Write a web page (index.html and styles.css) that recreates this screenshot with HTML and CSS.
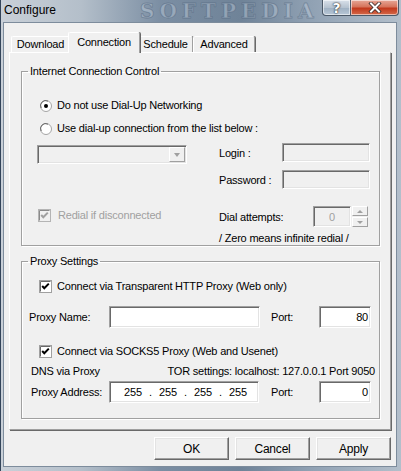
FILE: index.html
```html
<!DOCTYPE html>
<html>
<head>
<meta charset="utf-8">
<link rel="stylesheet" href="styles.css">
</head>
<body>
<div class="window">
  <div class="titlebar">
    <span class="title">Configure</span>
    <span class="wm-title">SOFTPEDIA</span>
    <div class="caption-btns">
      <div class="cbtn help">?</div>
      <div class="cbtn close">
        <svg width="14" height="11" viewBox="0 0 14 11"><path d="M3 1.5L11 9.5M11 1.5L3 9.5" stroke="#3a2a28" stroke-width="3.6" stroke-linecap="square"/><path d="M3 1.5L11 9.5M11 1.5L3 9.5" stroke="#fff" stroke-width="2" stroke-linecap="square"/></svg>
      </div>
    </div>
  </div>
  <div class="client">
    <div class="tabs">
      <div class="tab t-download">Download</div>
      <div class="tab t-connection active">Connection</div>
      <div class="tab t-schedule">Schedule</div>
      <div class="tab t-advanced">Advanced</div>
    </div>
    <div class="page">
      <fieldset class="group g1">
        <legend>Internet Connection Control</legend>
        <div class="g1-body">
          <div class="opt-row">
            <svg class="rb" width="12" height="12" viewBox="0 0 12 12"><circle cx="6" cy="6" r="5.5" fill="#fff" stroke="#a4a4a4"/><path d="M1.2 8A5 5 0 0 1 8 1.2" fill="none" stroke="#6a6a6a"/><circle cx="6" cy="6" r="2" fill="#000"/></svg>
            <span>Do not use Dial-Up Networking</span>
          </div>
          <div class="opt-row r2">
            <svg class="rb" width="12" height="12" viewBox="0 0 12 12"><circle cx="6" cy="6" r="5.5" fill="#fff" stroke="#a4a4a4"/><path d="M1.2 8A5 5 0 0 1 8 1.2" fill="none" stroke="#6a6a6a"/></svg>
            <span>Use dial-up connection from the list below :</span>
          </div>
          <div class="dial-block">
            <div class="left-col">
              <div class="field disabled combo">
                <div class="drop"><span class="arrow-down"></span></div>
              </div>
              <div class="opt-row redial">
                <svg width="13" height="13" viewBox="0 0 13 13"><rect x="0.5" y="0.5" width="12" height="12" fill="#f0f0f0" stroke="#b4b4b4"/><path d="M1.5 11.5V1.5H11.5" fill="none" stroke="#8a8a8a"/><path d="M3.2 6L5.3 8.2L9.8 3.6" stroke="#a0a0a0" stroke-width="2" fill="none"/></svg>
                <span class="dim">Redial if disconnected</span>
              </div>
            </div>
            <div class="right-col">
              <div class="frow">
                <span class="lbl w-login">Login :</span>
                <div class="field disabled in-login"></div>
              </div>
              <div class="frow pw">
                <span class="lbl w-login">Password :</span>
                <div class="field disabled in-login"></div>
              </div>
              <div class="frow dial">
                <span class="lbl w-dial">Dial attempts:</span>
                <div class="field disabled spin-in">0</div>
                <div class="spin-btns">
                  <div class="sbtn"><span class="arrow-up"></span></div>
                  <div class="sbtn"><span class="arrow-down small"></span></div>
                </div>
              </div>
              <div class="frow zero">/ Zero means infinite redial /</div>
            </div>
          </div>
        </div>
      </fieldset>
      <fieldset class="group g2">
        <legend>Proxy Settings</legend>
        <div class="g2-body">
          <div class="opt-row cb">
            <svg width="13" height="13" viewBox="0 0 13 13"><rect x="0.5" y="0.5" width="12" height="12" fill="#fff" stroke="#a0a0a0"/><path d="M1.5 11.5V1.5H11.5" fill="none" stroke="#696969"/><path d="M3.2 6L5.3 8.2L9.8 3.6" stroke="#000" stroke-width="2" fill="none"/></svg>
            <span>Connect via Transparent HTTP Proxy (Web only)</span>
          </div>
          <div class="prow name">
            <span class="lbl w-name">Proxy Name:</span>
            <div class="field in-name"></div>
            <span class="lbl w-port">Port:</span>
            <div class="field in-port">80</div>
          </div>
          <div class="opt-row cb cb2">
            <svg width="13" height="13" viewBox="0 0 13 13"><rect x="0.5" y="0.5" width="12" height="12" fill="#fff" stroke="#a0a0a0"/><path d="M1.5 11.5V1.5H11.5" fill="none" stroke="#696969"/><path d="M3.2 6L5.3 8.2L9.8 3.6" stroke="#000" stroke-width="2" fill="none"/></svg>
            <span>Connect via SOCKS5 Proxy (Web and Usenet)</span>
          </div>
          <div class="prow dns">
            <span>DNS via Proxy</span>
            <span>TOR settings: localhost: 127.0.0.1 Port 9050</span>
          </div>
          <div class="prow addr">
            <span class="lbl w-addr">Proxy Address:</span>
            <div class="field in-ip">
              <span class="oct">255</span><span class="dot">.</span><span class="oct">255</span><span class="dot">.</span><span class="oct">255</span><span class="dot">.</span><span class="oct">255</span>
            </div>
            <span class="lbl w-port2">Port:</span>
            <div class="field in-port">0</div>
          </div>
        </div>
      </fieldset>
    </div>
    <div class="buttons">
      <div class="btn">OK</div>
      <div class="btn">Cancel</div>
      <div class="btn">Apply</div>
    </div>
  </div>
</div>
</body>
</html>
```
FILE: styles.css
```css
html, body {
  margin: 0;
  padding: 0;
}
body {
  font: 11px "Liberation Sans", Arial, sans-serif;
  letter-spacing: -0.2px;
  color: #000;
  background: #8fa1b4;
}
.window {
  position: relative;
  width: 401px;
  height: 471px;
  box-sizing: border-box;
  display: flex;
  flex-direction: column;
  padding: 0 4px 4px 2px;
  border-left: 1px solid #34455a;
  overflow: hidden;
  background:
    linear-gradient(to right, #c9d0d8 0%, #b4bfca 20%, #7b8ea3 40%, #6f8398 60%, #91a2b4 78%, #b3bfcb 100%);
}
.titlebar {
  position: relative;
  height: 22px;
  display: flex;
  align-items: flex-start;
  flex: none;
}
.title {
  font: 12px "Liberation Sans", Arial, sans-serif;
  letter-spacing: 0;
  padding: 3px 0 0 1px;
  line-height: 15px;
  color: #000;
}
.wm-title {
  position: absolute;
  left: 137px;
  top: 1px;
  font: bold 20px "DejaVu Serif", serif;
  letter-spacing: 5px;
  line-height: 20px;
  color: rgba(210, 222, 235, 0.35);
  -webkit-text-stroke: 1px rgba(60, 80, 105, 0.35);
}
.caption-btns {
  margin-left: auto;
  margin-right: -2px;
  display: flex;
  position: relative;
  z-index: 1;
}
.cbtn {
  box-sizing: border-box;
  height: 16px;
  border: 1px solid #4b5968;
  border-top: none;
  display: flex;
  align-items: center;
  justify-content: center;
  box-shadow: inset 0 0 0 1px rgba(255,255,255,0.55);
}
.help {
  width: 29px;
  border-radius: 0 0 0 4px;
  background: linear-gradient(#d9e1ea, #b6c3d0 50%, #9eb0c2 51%, #b8c7d6);
  color: #fff;
  font: bold 14px "DejaVu Sans", sans-serif;
  text-shadow: 0 0 2px #222, 0 0 1px #222;
  line-height: 14px;
}
.close {
  width: 48px;
  border-left: none;
  border-radius: 0 0 4px 0;
  background: linear-gradient(#e7a898, #d6745c 45%, #c2391d 55%, #d46a4a);
}
.client {
  flex: 1;
  box-sizing: border-box;
  border: 1px solid #7d8c9c;
  background: #f0f0f0;
  display: flex;
  flex-direction: column;
  padding: 9px 4px 0 5px;
}
.tabs {
  display: flex;
  align-items: flex-end;
  height: 20px;
  flex: none;
}
.tab {
  box-sizing: border-box;
  height: 16px;
  border-top: 1px solid #fff;
  border-left: 1px solid #fff;
  border-right: 1px solid #a0a0a0;
  box-shadow: 1px 0 0 #696969;
  border-radius: 2px 2px 0 0;
  display: flex;
  align-items: center;
  justify-content: center;
  padding-bottom: 1px;
  background: #f0f0f0;
  position: relative;
}
.t-download { width: 59px; margin-left: 2px; }
.t-connection { width: 72px; margin: 0 -2px -1px -2px; height: 21px; z-index: 2; padding-bottom: 2px; }
.t-schedule { width: 55px; }
.t-advanced { width: 62px; }
.page {
  position: relative;
  width: 382px;
  height: 378px;
  box-sizing: border-box;
  flex: none;
  border-top: 1px solid #fff;
  border-left: 1px solid #fff;
  border-right: 1px solid #a0a0a0;
  border-bottom: 1px solid #a0a0a0;
  box-shadow: 1px 1px 0 #696969;
  display: flex;
  flex-direction: column;
}
.group {
  margin: 0 0 0 11px;
  padding: 0;
  width: 359px;
  box-sizing: border-box;
  border: 1px solid #a0a0a0;
  box-shadow: inset 1px 1px 0 #fff, 1px 1px 0 #fff;
  min-width: 0;
}
.g1 { margin-top: 12px; }
.g2 { margin-top: 9px; }
.group legend {
  padding: 0 2px;
  margin-left: 6px;
  line-height: 13px;
  height: 13px;
}
.opt-row {
  display: flex;
  align-items: center;
  height: 13px;
  line-height: 13px;
  gap: 5px;
  white-space: nowrap;
}
.opt-row svg { flex: none; }
.g1-body {
  display: flex;
  flex-direction: column;
  padding: 21px 0 1px 0;
}
.g1-body > .opt-row { padding-left: 18px; }
.r2 { margin-top: 10px; }
.dial-block {
  display: flex;
  margin-top: 8px;
  padding-left: 15px;
}
.left-col {
  width: 150px;
  display: flex;
  flex-direction: column;
}
.right-col {
  margin-left: 32px;
  display: flex;
  flex-direction: column;
}
.field {
  box-sizing: border-box;
  border: 1px solid;
  border-color: #a0a0a0 #fff #fff #a0a0a0;
  box-shadow: inset 1px 1px 0 #696969, inset -1px -1px 0 #e3e3e3;
  background: #fff;
}
.field.disabled { background: #f0f0f0; }
.combo {
  margin-top: 2px;
  height: 19px;
  display: flex;
  justify-content: flex-end;
  padding: 1px;
}
.drop {
  width: 16px;
  box-sizing: border-box;
  border: 1px solid;
  border-color: #fff #a0a0a0 #a0a0a0 #fff;
  background: #f0f0f0;
  display: flex;
  align-items: center;
  justify-content: center;
}
.arrow-down {
  width: 0;
  height: 0;
  border-left: 3.5px solid transparent;
  border-right: 3.5px solid transparent;
  border-top: 4px solid #a0a0a0;
}
.arrow-down.small {
  border-left-width: 3px;
  border-right-width: 3px;
  border-top-width: 3px;
}
.arrow-up {
  width: 0;
  height: 0;
  border-left: 3px solid transparent;
  border-right: 3px solid transparent;
  border-bottom: 3px solid #a0a0a0;
}
.redial { margin-top: 45px; gap: 7px; padding-left: 1px; }
.dim { color: #a0a0a0; }
.frow {
  display: flex;
  align-items: center;
  height: 19px;
  white-space: nowrap;
}
.lbl { flex: none; }
.w-login { width: 63px; }
.in-login { width: 88px; height: 19px; }
.pw { margin-top: 8px; }
.dial { margin-top: 17px; height: 21px; }
.w-dial { width: 94px; }
.spin-in {
  width: 38px;
  height: 21px;
  color: #a0a0a0;
  display: flex;
  align-items: center;
  justify-content: center;
}
.spin-btns {
  display: flex;
  flex-direction: column;
  width: 16px;
  height: 21px;
  margin-left: 1px;
  gap: 1px;
}
.sbtn {
  flex: 1;
  box-sizing: border-box;
  border: 1px solid;
  border-color: #fff #a0a0a0 #a0a0a0 #fff;
  background: #f0f0f0;
  display: flex;
  align-items: center;
  justify-content: center;
}
.zero { margin-top: 5px; height: 12px; line-height: 12px; }
.g2-body {
  display: flex;
  flex-direction: column;
  padding: 12px 0 15px 0;
}
.cb { padding-left: 17px; }
.prow {
  display: flex;
  align-items: center;
  white-space: nowrap;
}
.name { margin-top: 13px; height: 22px; padding-left: 7px; }
.w-name { width: 80px; }
.in-name { width: 151px; height: 22px; }
.w-port { width: 48px; margin-left: 11px; }
.in-port {
  width: 52px;
  height: 22px;
  display: flex;
  align-items: center;
  justify-content: flex-end;
  padding-right: 2px;
}
.cb2 { margin-top: 17px; }
.dns {
  margin-top: 6px;
  height: 13px;
  justify-content: space-between;
  padding: 0 4px 0 9px;
}
.addr { margin-top: 4px; height: 22px; padding-left: 9px; }
.w-addr { width: 78px; }
.in-ip {
  width: 150px;
  height: 22px;
  display: flex;
  align-items: center;
  padding-left: 9px;
}
.oct { width: 28px; text-align: center; }
.dot { width: 7px; text-align: center; }
.w-port2 { width: 48px; margin-left: 12px; }
.buttons {
  display: flex;
  justify-content: flex-end;
  gap: 6px;
  width: 382px;
  margin-top: 7px;
  flex: none;
}
.btn {
  box-sizing: border-box;
  width: 75px;
  height: 23px;
  border: 1px solid;
  border-color: #fff #696969 #696969 #fff;
  box-shadow: inset -1px -1px 0 #a0a0a0, inset 1px 1px 0 #e3e3e3;
  background: #f0f0f0;
  display: flex;
  align-items: center;
  justify-content: center;
  font-size: 12px;
}
```
